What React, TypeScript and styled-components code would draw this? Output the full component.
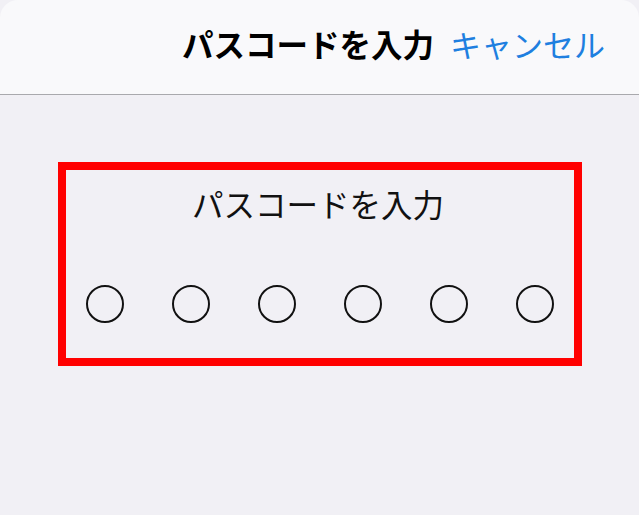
import React from 'react';
import styled, { createGlobalStyle } from 'styled-components';

const GlobalStyle = createGlobalStyle`
  html, body {
    margin: 0;
    padding: 0;
    background: #f1f0f5;
  }
  body {
    font-family: 'Noto Sans CJK JP', 'Noto Sans', sans-serif;
  }
`;

const DIGITS = 6;

function App() {
  return (
    <>
      <GlobalStyle />
      <Screen>
        <Header>
          <HeaderTitle>パスコードを入力</HeaderTitle>
          <CancelButton>キャンセル</CancelButton>
        </Header>
        <Content>
          <PasscodeBox>
            <Prompt>パスコードを入力</Prompt>
            <DotRow>
              {Array.from({ length: DIGITS }).map((_, i) => (
                <Dot key={i} />
              ))}
            </DotRow>
          </PasscodeBox>
        </Content>
      </Screen>
    </>
  );
}

const Screen = styled.div`
  width: 639px;
  height: 515px;
  display: flex;
  flex-direction: column;
  background: #f1f0f5;
  overflow: hidden;
`;

const Header = styled.div`
  height: 95px;
  box-sizing: border-box;
  display: flex;
  align-items: center;
  justify-content: flex-end;
  gap: 16px;
  padding: 0 34px 6px 0;
  background: #f9f9fb;
  border-bottom: 1px solid #a9a9ad;
  border-radius: 18px 18px 0 0;
`;

const HeaderTitle = styled.div`
  font-size: 31.5px;
  font-weight: 700;
  color: #000;
  line-height: 1.2;
`;

const CancelButton = styled.button`
  border: none;
  background: none;
  padding: 0;
  font-family: inherit;
  font-size: 31px;
  font-weight: 400;
  color: #1e7fe0;
  line-height: 1.2;
  cursor: pointer;
`;

const Content = styled.div`
  flex: 1;
  padding: 67px 57px 0 58px;
`;

const PasscodeBox = styled.div`
  height: 204px;
  box-sizing: border-box;
  border: 8px solid #ff0000;
  display: flex;
  flex-direction: column;
  align-items: center;
  padding-top: 14px;
`;

const Prompt = styled.div`
  font-size: 31.5px;
  font-weight: 400;
  color: #111;
  line-height: 38px;
  margin-right: 4px;
`;

const DotRow = styled.div`
  display: flex;
  gap: 48px;
  margin-top: 63px;
`;

const Dot = styled.div`
  width: 38px;
  height: 38px;
  box-sizing: border-box;
  border: 2px solid #111;
  border-radius: 50%;
`;

export default App;
